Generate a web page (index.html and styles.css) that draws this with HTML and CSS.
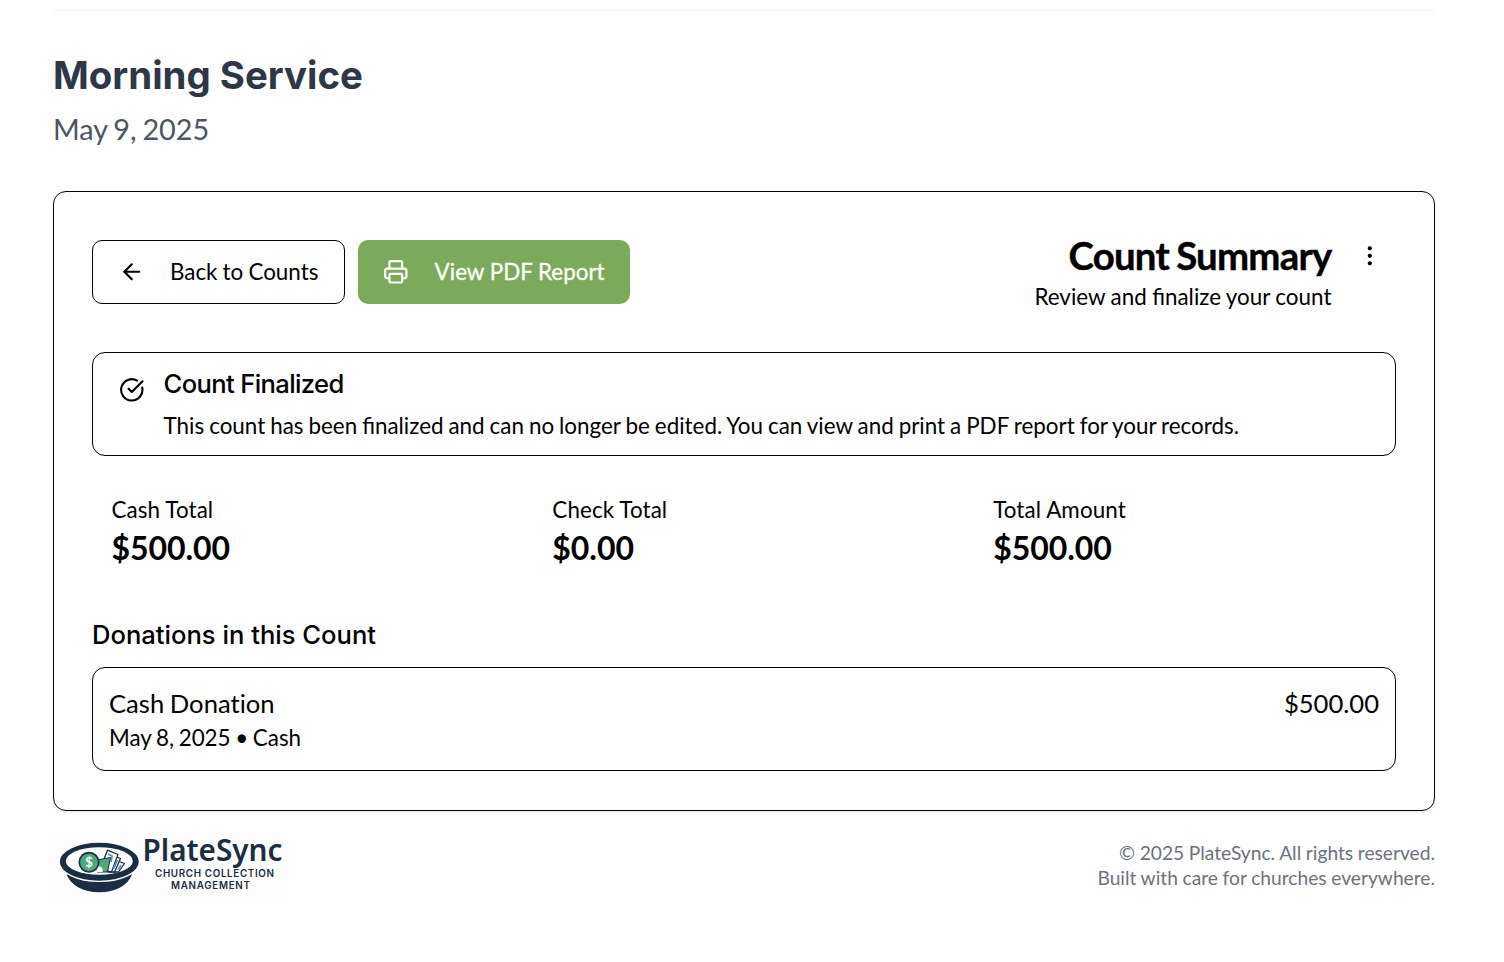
FILE: index.html
```html
<!DOCTYPE html>
<html lang="en">
<head>
<meta charset="utf-8">
<title>PlateSync</title>
<link rel="stylesheet" href="styles.css">
</head>
<body>
<div class="page">
  <header class="page-header">
    <h1 class="page-title">Morning Service</h1>
    <p class="page-date">May 9, 2025</p>
  </header>
  <main class="card">
    <div class="card-top">
      <div class="actions">
        <button class="btn btn-outline">
          <svg class="icon" viewBox="0 0 24 24"><path d="m12 19-7-7 7-7"/><path d="M19 12H5"/></svg>
          <span>Back to Counts</span>
        </button>
        <button class="btn btn-green">
          <svg class="icon" viewBox="0 0 24 24"><path d="M6 18H4a2 2 0 0 1-2-2v-5a2 2 0 0 1 2-2h16a2 2 0 0 1 2 2v5a2 2 0 0 1-2 2h-2"/><path d="M6 9V3a1 1 0 0 1 1-1h10a1 1 0 0 1 1 1v6"/><rect x="6" y="14" width="12" height="8" rx="1"/></svg>
          <span>View PDF Report</span>
        </button>
      </div>
      <div class="summary">
        <div class="summary-text">
          <h2 class="summary-title">Count Summary</h2>
          <p class="summary-sub">Review and finalize your count</p>
        </div>
        <svg class="icon more" viewBox="0 0 24 24"><circle cx="12" cy="12" r="1"/><circle cx="12" cy="5" r="1"/><circle cx="12" cy="19" r="1"/></svg>
      </div>
    </div>
    <section class="alert">
      <svg class="icon alert-icon" viewBox="0 0 24 24"><path d="M21.801 10A10 10 0 1 1 17 3.335"/><path d="m9 11 3 3L22 4"/></svg>
      <div>
        <h3 class="alert-title">Count Finalized</h3>
        <p class="alert-text">This count has been finalized and can no longer be edited. You can view and print a PDF report for your records.</p>
      </div>
    </section>
    <section class="totals">
      <div><p class="total-label">Cash Total</p><p class="total-value">$500.00</p></div>
      <div><p class="total-label">Check Total</p><p class="total-value">$0.00</p></div>
      <div><p class="total-label">Total Amount</p><p class="total-value">$500.00</p></div>
    </section>
    <h3 class="list-title">Donations in this Count</h3>
    <section class="donation">
      <div>
        <p class="donation-name">Cash Donation</p>
        <p class="donation-meta">May 8, 2025 • Cash</p>
      </div>
      <p class="donation-amount">$500.00</p>
    </section>
  </main>
  <footer class="footer">
    <svg class="logo" width="235" height="67" viewBox="0 0 235 67">
      <rect width="235" height="67" fill="#fdfdfd"/>
      <path d="M13.5 42.500c5 11 16 17.800 32.800 17.800s28-6.800 32.800-17.800z" fill="#1b2d42"/>
      <ellipse cx="46.300" cy="29.700" rx="40.200" ry="19.700" fill="#1b2d42" stroke="#fdfdfd" stroke-width="1.400"/>
      <ellipse cx="46.300" cy="29" rx="33.500" ry="13.800" fill="#fdfdfd"/>
      <g stroke="#1b2d42" stroke-width="1.300" stroke-linejoin="round">
        <path d="m60 40 5-11 6.500 2.500-6 8.500z" fill="#f4f8fc"/>
        <path d="m55 40 6-16 6.500 2.500-6 13.500z" fill="#fdfdfd"/>
        <path d="m51 27 3.500-8.800 10.500 4.300-6.500 17.500-5-1z" fill="#fdfdfd"/>
      </g>
      <path d="m55 22 4 2-1 6M64.500 28l-4 9M68 33l-3 5" fill="none" stroke="#5b93d2" stroke-width="1.800"/>
      <path d="m44 28 13.500-2.500L54.500 40H44z" fill="#4fa878" stroke="#1b2d42" stroke-width="1"/>
      <path d="M45 34q6 1 4.500 6H42z" fill="#fdfdfd"/>
      <circle cx="36" cy="30.300" r="9.700" fill="#4fa878" stroke="#1b2d42" stroke-width="1.700"/>
      <text x="36" y="35" class="logo-coin">$</text>
      <text x="89.500" y="28.500" class="logo-name" textLength="140" lengthAdjust="spacingAndGlyphs">PlateSync</text>
      <text x="102" y="45" class="logo-tag" textLength="119">CHURCH COLLECTION</text>
      <text x="118" y="57" class="logo-tag" textLength="79">MANAGEMENT</text>
    </svg>
    <div class="legal">
      <p>© 2025 PlateSync. All rights reserved.</p>
      <p>Built with care for churches everywhere.</p>
    </div>
  </footer>
</div>
</body>
</html>
```
FILE: styles.css
```css
* { box-sizing: border-box; margin: 0; padding: 0; }
body { background: #fefefe; color: #000; font-family: Lato, sans-serif; font-size: 22.4px; line-height: 32px; }
.page { width: 1382px; margin: 10px 0 0 53px; border-top: 1px solid #f3f4f6; }
.page-header { height: 180px; padding-top: 39px; }
.page-title { font: 700 38.4px/51px Inter, sans-serif; color: #2d3748; white-space: nowrap; }
.page-date { margin-top: 6px; font-size: 28.8px; line-height: 45px; color: #4b5563; word-spacing: -1.5px; }
.card { height: 620px; padding: 45px 38px 0; border: 1px solid #000; border-radius: 13px; box-shadow: 0 2px 3px rgba(0,0,0,.05); }
.card-top { display: flex; justify-content: space-between; height: 115px; }
.actions { display: flex; gap: 13px; padding-top: 3px; }
.btn { display: flex; align-items: center; height: 64px; border-radius: 10px; font: 400 22.4px/32px Lato, sans-serif; white-space: nowrap; }
.btn-outline { width: 253px; padding-left: 26px; background: #fefefe; border: 1px solid #000; color: #000; word-spacing: -.6px; }
.btn-outline .icon { margin-right: 25.4px; }
.btn-green { width: 272px; padding-left: 25px; background: #7bab5a; border: 0; color: #fff; -webkit-text-stroke: .3px #fff; }
.btn-green .icon { margin-right: 26px; }
.icon { width: 25.6px; height: 25.6px; flex: none; fill: none; stroke: currentColor; stroke-width: 2; stroke-linecap: round; stroke-linejoin: round; }
.summary { display: flex; text-align: right; white-space: nowrap; }
.summary-title { font-size: 38.4px; line-height: 38px; font-weight: 700; letter-spacing: -.78px; word-spacing: -1.3px; -webkit-text-stroke: .4px #000; margin-top: -1px; }
.summary-sub { margin-top: 7px; word-spacing: -.3px; }
.more { margin: 6px 13px 0 26px; }
.alert { display: flex; height: 104px; padding: 15px 25px 0; border: 1px solid #000; border-radius: 13px; }
.alert-icon { margin: 9px 19.4px 0 .6px; }
.alert-title { font: 500 25.6px/32px Inter, sans-serif; letter-spacing: -0.64px; }
.alert-text { margin-top: 10px; white-space: nowrap; word-spacing: -.75px; }
.totals { display: grid; grid-template-columns: repeat(3, 1fr); column-gap: 19px; padding: 38px 0 0 19.5px; margin-right: -19px; height: 160px; }
.total-label { letter-spacing: .1px; }
.total-value { margin-top: 3px; font-size: 32px; line-height: 38px; font-weight: 700; letter-spacing: -.05px; }
.list-title { margin-top: 3px; font: 500 25.6px/32px Inter, sans-serif; }
.donation { display: flex; justify-content: space-between; height: 104px; margin-top: 16px; padding: 17px 16px 0; border: 1px solid #000; border-radius: 13px; }
.donation-name, .donation-amount { font-size: 25.6px; line-height: 36px; }
.donation-name { font-variant-ligatures: none; word-spacing: -.9px; }
.donation-meta { margin-top: 1px; line-height: 32px; word-spacing: -1.1px; }
.footer { display: flex; justify-content: space-between; padding-top: 21px; }
.logo { display: block; overflow: visible; }
.logo-coin { font: 700 13px Lato, sans-serif; fill: #fff; text-anchor: middle; }
.logo-name { font: 600 30px "Noto Sans", sans-serif; fill: #1b2d42; }
.logo-tag { font: 600 9.8px Inter, sans-serif; fill: #1b2d42; }
.legal { padding-top: 8px; font-size: 19.2px; line-height: 25px; color: #6b7280; text-align: right; white-space: nowrap; word-spacing: -.25px; }
```
